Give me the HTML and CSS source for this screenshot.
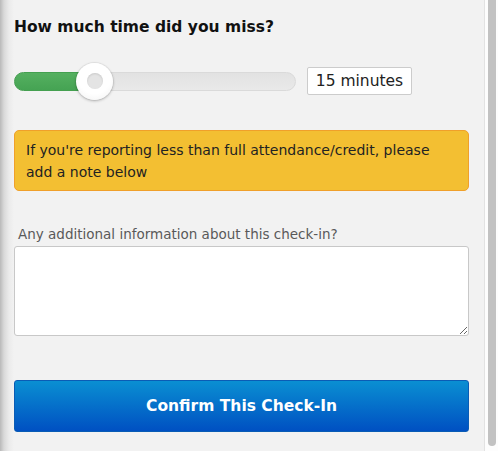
FILE: index.html
```html
<!DOCTYPE html>
<html lang="en">
<head>
<meta charset="utf-8">
<title>Check-In</title>
<link rel="stylesheet" href="styles.css">
</head>
<body>
<div class="page">
  <main class="content">
    <h2 class="question">How much time did you miss?</h2>
    <div class="slider-row">
      <div class="slider">
        <div class="fill" style="width: 80px"></div>
        <div class="knob" style="left: 61px"><span class="knob-dot"></span></div>
      </div>
      <div class="value">15 minutes</div>
    </div>
    <div class="alert">If you're reporting less than full attendance/credit, please add a note below</div>
    <label class="note-label" for="note">Any additional information about this check-in?</label>
    <textarea class="note" id="note"></textarea>
    <button class="confirm" type="button">Confirm This Check-In</button>
  </main>
  <div class="scrollbar"><div class="thumb"></div></div>
</div>
</body>
</html>
```

FILE: styles.css
```css
html, body {
  margin: 0;
  padding: 0;
  height: 100%;
}

body {
  font-family: "DejaVu Sans", Verdana, sans-serif;
  color: #222;
  background: #f2f2f2;
}

.page {
  display: flex;
  height: 100vh;
  overflow: hidden;
}

.content {
  flex: 1;
  display: flex;
  flex-direction: column;
  padding: 17px 15px 0 14px;
  background: linear-gradient(90deg, #b9b9b9 0px, #d9d9d9 4px, #ebebeb 9px, #f2f2f2 14px);
}

.question {
  margin: 0;
  font-size: 15.5px;
  font-weight: bold;
  line-height: 20px;
  color: #111;
}

.slider-row {
  display: flex;
  align-items: center;
  gap: 11px;
  margin-top: 30px;
}

.slider {
  position: relative;
  width: 280px;
  height: 17px;
  border: 1px solid #dadada;
  border-radius: 10px;
  background: linear-gradient(#e2e2e2, #e9e9e9);
}

.fill {
  height: 100%;
  border-radius: 10px 0 0 10px;
  background: linear-gradient(#55b060, #45a353);
  margin: -1px 0 0 -1px;
  border: 1px solid #44a050;
}

.knob {
  position: absolute;
  top: -10px;
  width: 37px;
  height: 37px;
  border-radius: 50%;
  background: radial-gradient(circle at 50% 40%, #ffffff 55%, #f0f0f0 100%);
  box-shadow: 0 1px 3px rgba(0, 0, 0, 0.28), 0 0 0 1px rgba(0, 0, 0, 0.04);
  display: flex;
  align-items: center;
  justify-content: center;
}

.knob-dot {
  width: 16px;
  height: 16px;
  border-radius: 50%;
  background: #e4e4e4;
  box-shadow: inset 0 1px 2px rgba(0, 0, 0, 0.12);
}

.value {
  width: 103px;
  height: 26px;
  border: 1px solid #cccccc;
  border-radius: 2px;
  background: #fff;
  font-size: 15.5px;
  line-height: 26px;
  text-align: center;
  color: #222;
}

.alert {
  margin-top: 35px;
  padding: 8px 11px 7px;
  border: 1px solid #f0a02a;
  border-radius: 5px;
  background: #f3bf32;
  font-size: 14px;
  line-height: 22px;
  color: #222;
}

.note-label {
  display: block;
  margin: 34px 0 3px 4px;
  font-size: 13.5px;
  line-height: 18px;
  color: #595959;
}

.note {
  display: block;
  box-sizing: border-box;
  width: 100%;
  height: 90px;
  margin: 0;
  border: 1px solid #c8c8c8;
  border-radius: 3px;
  background: #fff;
  resize: vertical;
  font-family: inherit;
}

.confirm {
  margin-top: 44px;
  height: 52px;
  width: 100%;
  border: 1px solid #0a5cb5;
  border-radius: 3px;
  background: linear-gradient(#0a8fd2, #0050c2);
  color: #fff;
  font-family: "DejaVu Sans", Verdana, sans-serif;
  font-size: 15.5px;
  font-weight: bold;
  cursor: pointer;
}

.scrollbar {
  border-left: 1px solid #e2e2e2;
  background: #fdfdfd;
  padding-left: 3px;
  box-sizing: border-box;
  width: 14px;
}

.thumb {
  width: 8px;
  height: 446px;
  background: #c2c2c2;
  border-radius: 0 0 4px 4px;
}
```
